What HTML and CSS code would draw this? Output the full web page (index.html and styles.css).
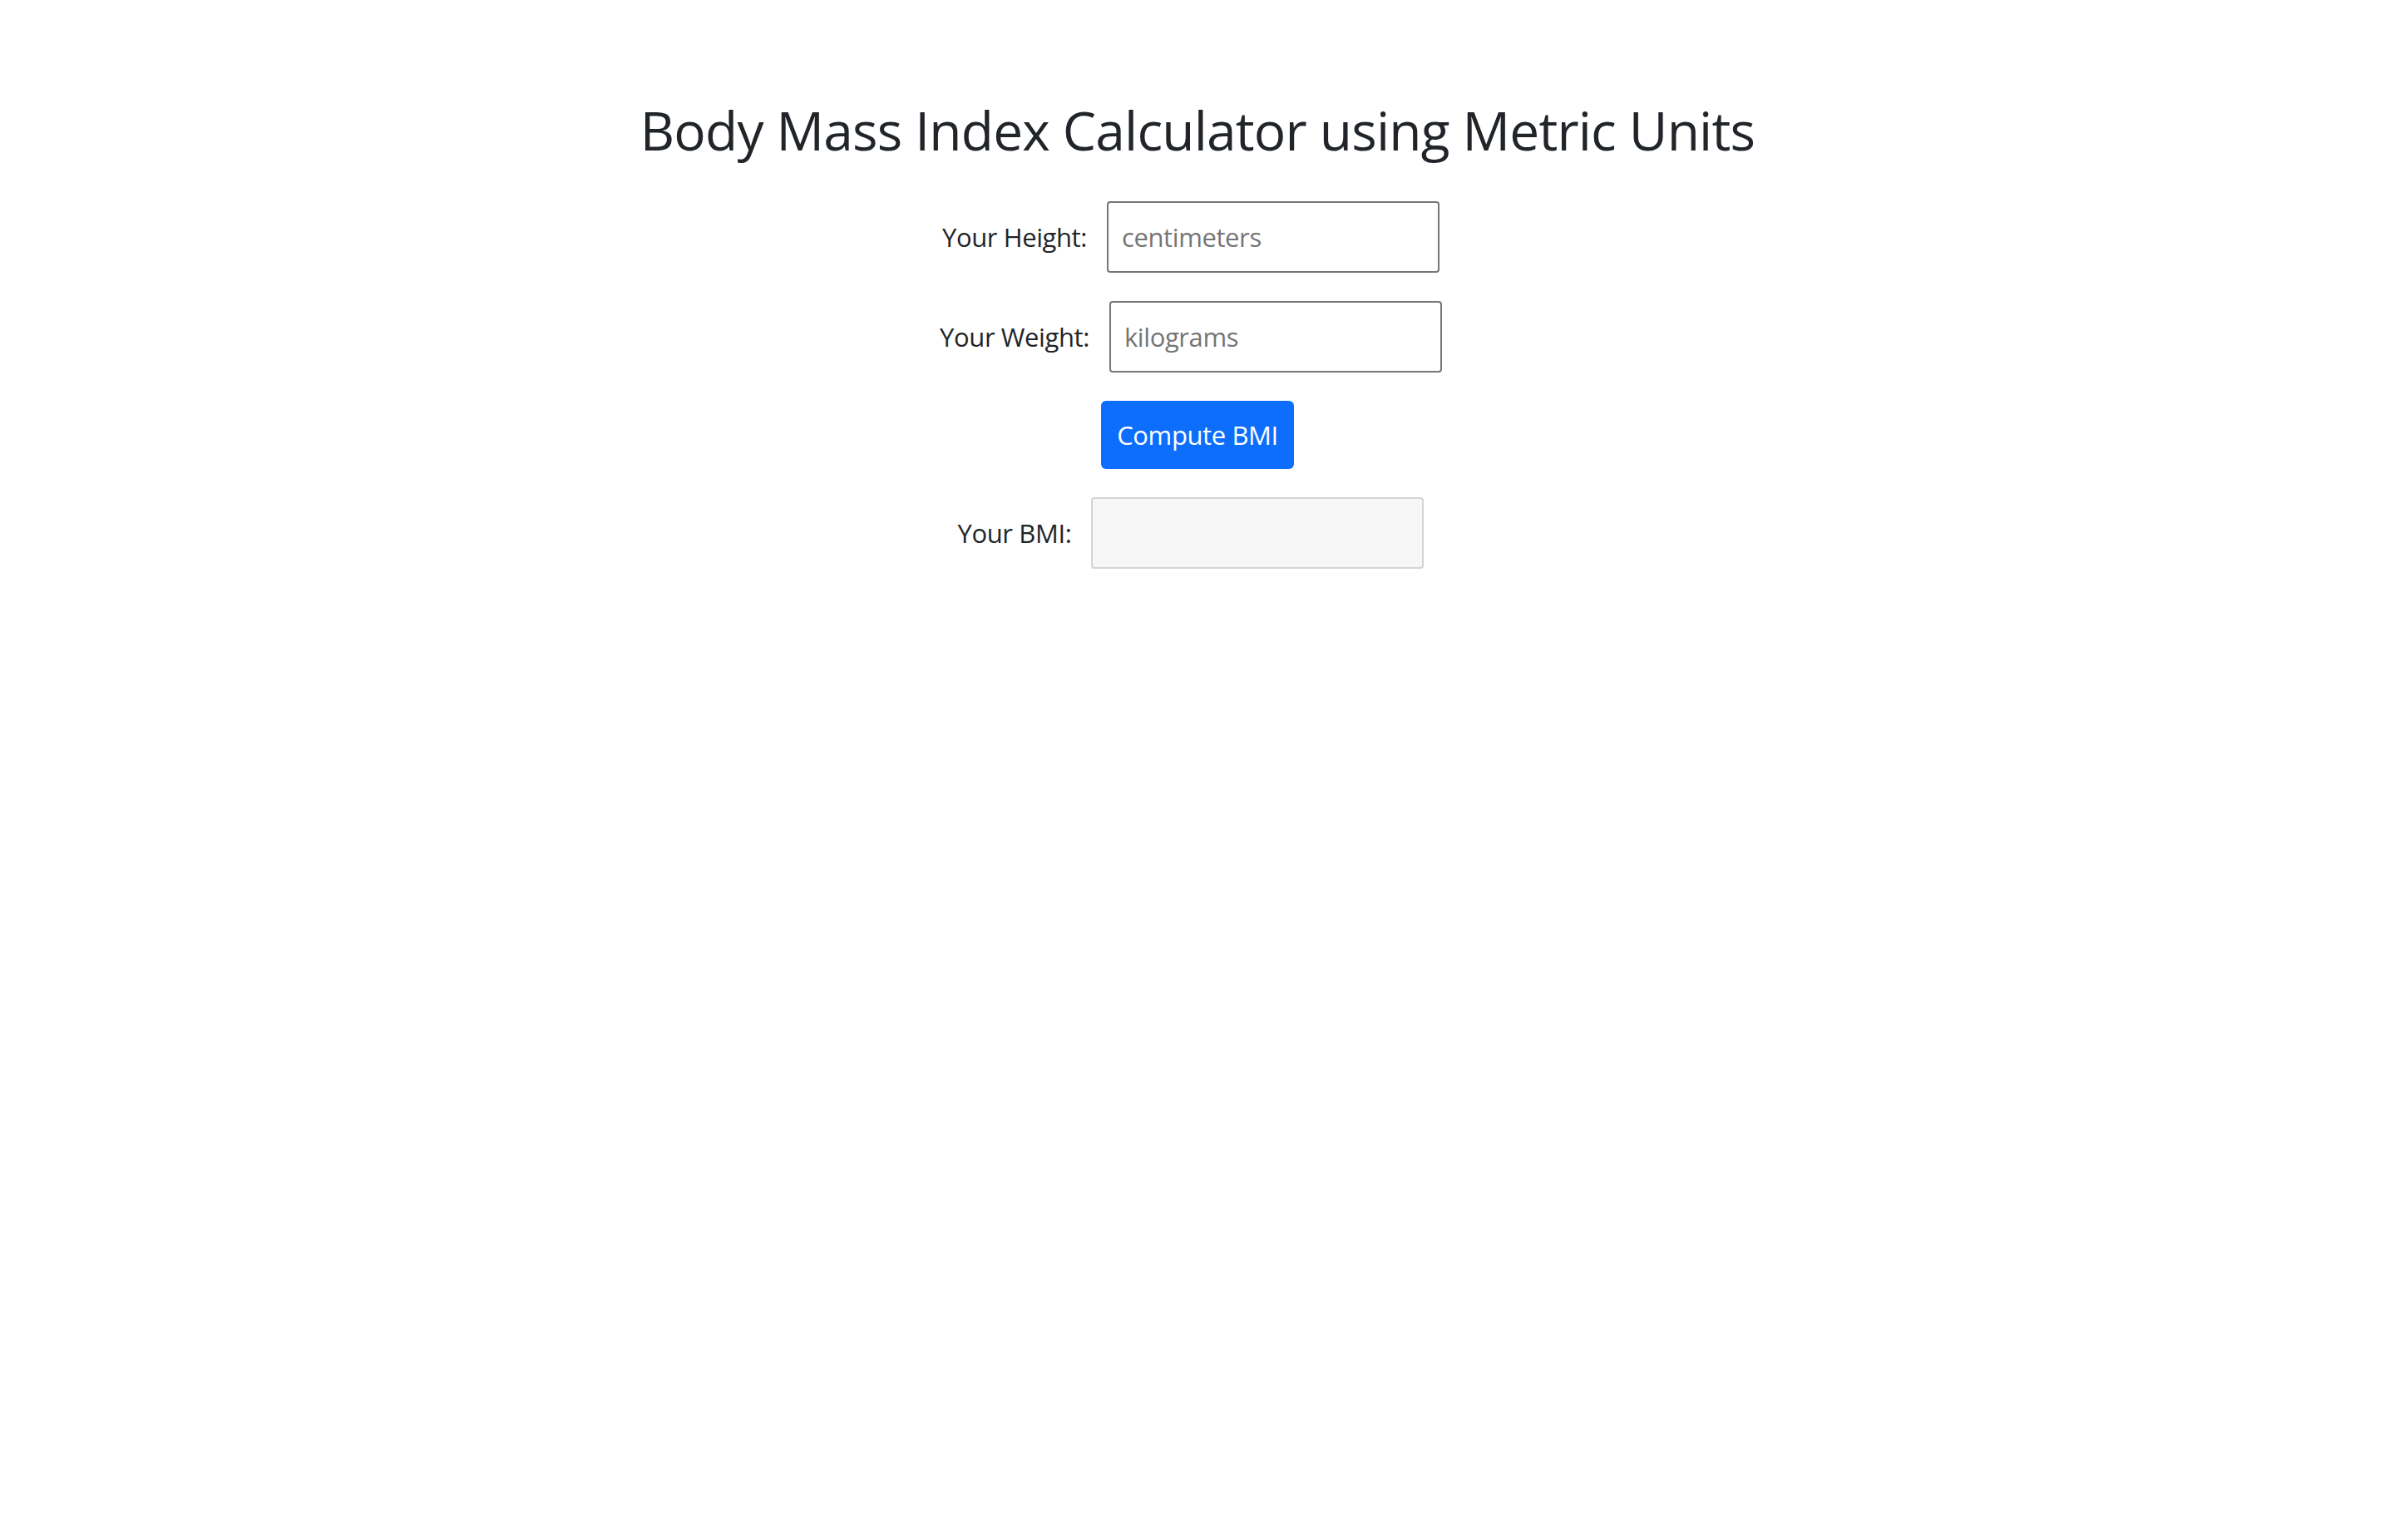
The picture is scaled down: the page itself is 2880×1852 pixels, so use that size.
FILE: index.html
```html
<!DOCTYPE html>
<html lang="en">
<head>
<meta charset="utf-8">
<title>BMI Calculator</title>
<link rel="stylesheet" href="styles.css">
</head>
<body>
<main class="page">
  <h1 class="title">Body Mass Index Calculator using Metric Units</h1>
  <form class="calc">
    <div class="row">
      <label class="label" for="height">Your Height:</label>
      <input class="field" id="height" type="text" placeholder="centimeters">
    </div>
    <div class="row">
      <label class="label" for="weight">Your Weight:</label>
      <input class="field" id="weight" type="text" placeholder="kilograms">
    </div>
    <div class="row row-button">
      <button class="btn" type="button">Compute BMI</button>
    </div>
    <div class="row">
      <label class="label" for="bmi">Your BMI:</label>
      <input class="field field-readonly" id="bmi" type="text" readonly>
    </div>
  </form>
</main>
</body>
</html>
```
FILE: styles.css
```css
html, body {
  margin: 0;
  padding: 0;
  background: #ffffff;
}
body {
  font-family: "Open Sans", "Noto Sans", sans-serif;
  color: #212529;
}
.page {
  display: flex;
  flex-direction: column;
  align-items: center;
}
.title {
  margin: 117px 0 45px 0;
  font-size: 64px;
  line-height: 80px;
  font-weight: 500;
  letter-spacing: -0.8px;
  color: #212529;
}
.calc {
  display: flex;
  flex-direction: column;
  gap: 34px;
  width: 100%;
}
.row {
  display: flex;
  justify-content: center;
  align-items: center;
  gap: 24px;
  padding-right: 16px;
}
.row-button {
  padding-right: 0;
}
.label {
  font-size: 31px;
  line-height: 48px;
  letter-spacing: -0.4px;
  color: #212529;
}
.field {
  box-sizing: border-box;
  width: 400px;
  height: 86px;
  margin: 0;
  padding: 0 16px;
  border: 2px solid #767676;
  border-radius: 4px;
  background: #ffffff;
  font-family: inherit;
  font-size: 31px;
  letter-spacing: -0.4px;
  color: #212529;
  outline: none;
}
.field::placeholder {
  color: #757575;
}
.field-readonly {
  background: #f7f7f7;
  border-color: #d4d4d4;
}
.btn {
  box-sizing: border-box;
  width: 232px;
  height: 82px;
  margin: 0;
  padding: 0;
  border: none;
  border-radius: 6px;
  background: #0d6efd;
  color: #ffffff;
  font-family: inherit;
  font-size: 31px;
  line-height: 48px;
  letter-spacing: -0.4px;
  white-space: nowrap;
  cursor: pointer;
}
```
